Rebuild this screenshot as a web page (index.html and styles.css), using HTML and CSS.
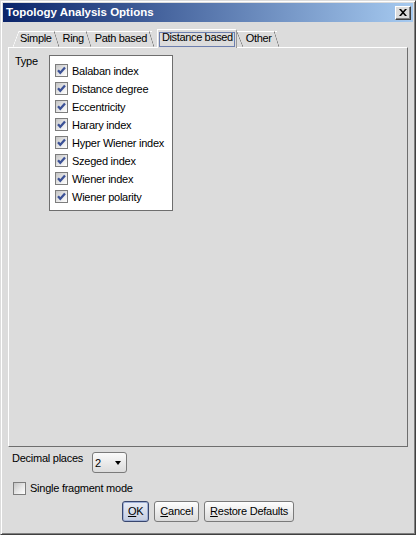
FILE: index.html
```html
<!DOCTYPE html>
<html lang="en">
<head>
<meta charset="utf-8">
<title>Topology Analysis Options</title>
<link rel="stylesheet" href="styles.css">
</head>
<body>
<div class="window">
  <div class="titlebar">
    <span class="title">Topology Analysis Options</span>
    <button class="close" aria-label="Close">
      <svg width="8" height="7" viewBox="0 0 8 7"><path d="M0 0h2l2 2.3L6 0h2L5 3.5 8 7H6L4 4.7 2 7H0l3-3.5z" fill="#000"/></svg>
    </button>
  </div>

  <div class="tabs">
    <div class="tab first">Simple</div>
    <div class="tab">Ring</div>
    <div class="tab">Path based</div>
    <div class="tab selected"><span class="focus">Distance based</span></div>
    <div class="tab after-selected">Other</div>
  </div>

  <div class="panel">
    <div class="type-label">Type</div>
    <div class="list">
      <div class="item"><span class="cb"><svg width="11" height="11" viewBox="0 0 11 11"><path d="M2 5.2l2.3 2.6L9 2.6" fill="none" stroke="#3b5196" stroke-width="2.3"/></svg></span>Balaban index</div>
      <div class="item"><span class="cb"><svg width="11" height="11" viewBox="0 0 11 11"><path d="M2 5.2l2.3 2.6L9 2.6" fill="none" stroke="#3b5196" stroke-width="2.3"/></svg></span>Distance degree</div>
      <div class="item"><span class="cb"><svg width="11" height="11" viewBox="0 0 11 11"><path d="M2 5.2l2.3 2.6L9 2.6" fill="none" stroke="#3b5196" stroke-width="2.3"/></svg></span>Eccentricity</div>
      <div class="item"><span class="cb"><svg width="11" height="11" viewBox="0 0 11 11"><path d="M2 5.2l2.3 2.6L9 2.6" fill="none" stroke="#3b5196" stroke-width="2.3"/></svg></span>Harary index</div>
      <div class="item"><span class="cb"><svg width="11" height="11" viewBox="0 0 11 11"><path d="M2 5.2l2.3 2.6L9 2.6" fill="none" stroke="#3b5196" stroke-width="2.3"/></svg></span>Hyper Wiener index</div>
      <div class="item"><span class="cb"><svg width="11" height="11" viewBox="0 0 11 11"><path d="M2 5.2l2.3 2.6L9 2.6" fill="none" stroke="#3b5196" stroke-width="2.3"/></svg></span>Szeged index</div>
      <div class="item"><span class="cb"><svg width="11" height="11" viewBox="0 0 11 11"><path d="M2 5.2l2.3 2.6L9 2.6" fill="none" stroke="#3b5196" stroke-width="2.3"/></svg></span>Wiener index</div>
      <div class="item"><span class="cb"><svg width="11" height="11" viewBox="0 0 11 11"><path d="M2 5.2l2.3 2.6L9 2.6" fill="none" stroke="#3b5196" stroke-width="2.3"/></svg></span>Wiener polarity</div>
    </div>
  </div>

  <div class="decimal-row">
    <span class="decimal-label">Decimal places</span>
    <div class="combo"><span class="combo-value">2</span><span class="arrow"></span></div>
  </div>

  <div class="single-row">
    <span class="cb"></span><span>Single fragment mode</span>
  </div>

  <div class="buttons">
    <button class="btn default"><u>O</u>K</button>
    <button class="btn"><u>C</u>ancel</button>
    <button class="btn"><u>R</u>estore Defaults</button>
  </div>
</div>
</body>
</html>
```

FILE: styles.css
```css
* { box-sizing: border-box; }

html, body {
  margin: 0;
  padding: 0;
  background: #dcdcdc;
}

body {
  font-family: "Liberation Sans", Arial, sans-serif;
  font-size: 11px;
  letter-spacing: -0.25px;
  color: #000;
}

.window {
  width: 416px;
  height: 535px;
  display: flex;
  flex-direction: column;
  background: #dcdcdc;
  border: 1px solid;
  border-color: #dcdcdc #404040 #404040 #dcdcdc;
  box-shadow: inset 1px 1px 0 #ffffff, inset -1px -1px 0 #808080;
  padding: 2px;
}

/* Title bar */
.titlebar {
  height: 19px;
  flex: none;
  display: flex;
  align-items: center;
  justify-content: space-between;
  padding: 0 2px 0 3px;
  background: linear-gradient(to right, #0a246a 0%, #a6caf0 100%);
}

.title {
  color: #fff;
  font-weight: bold;
  font-size: 11.5px;
  letter-spacing: 0;
  line-height: 19px;
}

.close {
  width: 16px;
  height: 14px;
  margin: 0;
  padding: 0;
  display: flex;
  align-items: center;
  justify-content: center;
  background: #dcdcdc;
  border: 1px solid;
  border-color: #ffffff #404040 #404040 #ffffff;
  box-shadow: inset -1px -1px 0 #808080;
}

/* Tabs */
.tabs {
  flex: none;
  height: 18px;
  margin-top: 7px;
  padding-left: 10px;
  display: flex;
  align-items: flex-end;
  letter-spacing: -0.35px;
}

.tab {
  position: relative;
  height: 16px;
  line-height: 13px;
  padding: 0 5px 2px 6px;
  border-top: 1px solid #ffffff;
  white-space: nowrap;
}

.tab::after {
  content: "";
  position: absolute;
  top: -1px;
  right: -2px;
  width: 5px;
  height: 16px;
  background: linear-gradient(to bottom left, transparent calc(50% - 0.6px), #7c7c7c 50%, transparent calc(50% + 0.6px));
}

.tab.first {
  padding-left: 7px;
}

.tab.first::before {
  content: "";
  position: absolute;
  top: -1px;
  left: 0;
  width: 6px;
  height: 16px;
  background: linear-gradient(to bottom right, #dcdcdc calc(50% - 0.6px), #ffffff 50%, #dcdcdc calc(50% + 0.6px));
}

.tab.selected {
  z-index: 1;
  height: 19px;
  margin-bottom: -1px;
  margin-left: 5px;
  padding: 2px 1px 1px 1px;
  background: #dcdcdc;
  border-left: 1px solid #ffffff;
  border-right: 1px solid #9a9a9a;
  border-top-right-radius: 2px;
}

.tab.selected::after {
  top: 2px;
  right: -7px;
  width: 6px;
  height: 15px;
}

.focus {
  display: block;
  height: 15px;
  line-height: 9px;
  padding: 0 1px 4px 2px;
  border: 1px solid #6d7fae;
}

.tab.after-selected {
  padding-left: 9px;
}

/* Panel */
.panel {
  flex: none;
  height: 400px;
  margin: 0 5px;
  padding: 7px 6px;
  display: flex;
  align-items: flex-start;
  border: 1px solid;
  border-color: #ffffff #6e6e6e #6e6e6e #ffffff;
}

.type-label {
  width: 34px;
  line-height: 13px;
}

.list {
  background: #ffffff;
  border: 1px solid #6e6e6e;
  padding: 6px 8px 4px 5px;
}

.item {
  height: 18px;
  display: flex;
  align-items: center;
  gap: 4px;
  white-space: nowrap;
  padding-bottom: 1px;
}

.cb {
  flex: none;
  width: 13px;
  height: 13px;
  display: flex;
  align-items: center;
  justify-content: center;
  border: 1px solid #7d7d7d;
  background: linear-gradient(135deg, #c4c4c4 0%, #e8e8e8 55%, #ffffff 100%);
}

/* Decimal places */
.decimal-row {
  flex: none;
  margin-top: 5px;
  padding-left: 9px;
  display: flex;
  align-items: flex-start;
}

.decimal-label {
  width: 80px;
  line-height: 13px;
}

.combo {
  width: 35px;
  height: 21px;
  display: flex;
  align-items: center;
  justify-content: space-between;
  padding: 0 5px 0 2px;
  border: 1px solid #7a7a7a;
  border-radius: 3px;
  background: linear-gradient(#fafafa, #dcdcdc);
}

.combo-value {
  line-height: 13px;
  padding-top: 1px;
}

.arrow {
  width: 0;
  height: 0;
  border-left: 3.5px solid transparent;
  border-right: 3.5px solid transparent;
  border-top: 4px solid #000;
}

/* Single fragment */
.single-row {
  flex: none;
  margin-top: 9px;
  padding-left: 10px;
  height: 13px;
  display: flex;
  align-items: center;
  gap: 4px;
  line-height: 13px;
}

/* Buttons */
.buttons {
  flex: none;
  margin-top: 6px;
  display: flex;
  justify-content: center;
  gap: 5px;
}

.btn {
  height: 21px;
  margin: 0;
  padding: 0 5px;
  font: inherit;
  letter-spacing: inherit;
  color: #000;
  line-height: 13px;
  border: 1px solid #7a7a7a;
  border-radius: 3px;
  background: linear-gradient(#fefefe, #dadada);
}

.btn.default {
  border-color: #38466e;
  box-shadow: inset 0 0 0 1px #9fb0d6;
  background: linear-gradient(#e9edf6, #c5cde0);
}
```
